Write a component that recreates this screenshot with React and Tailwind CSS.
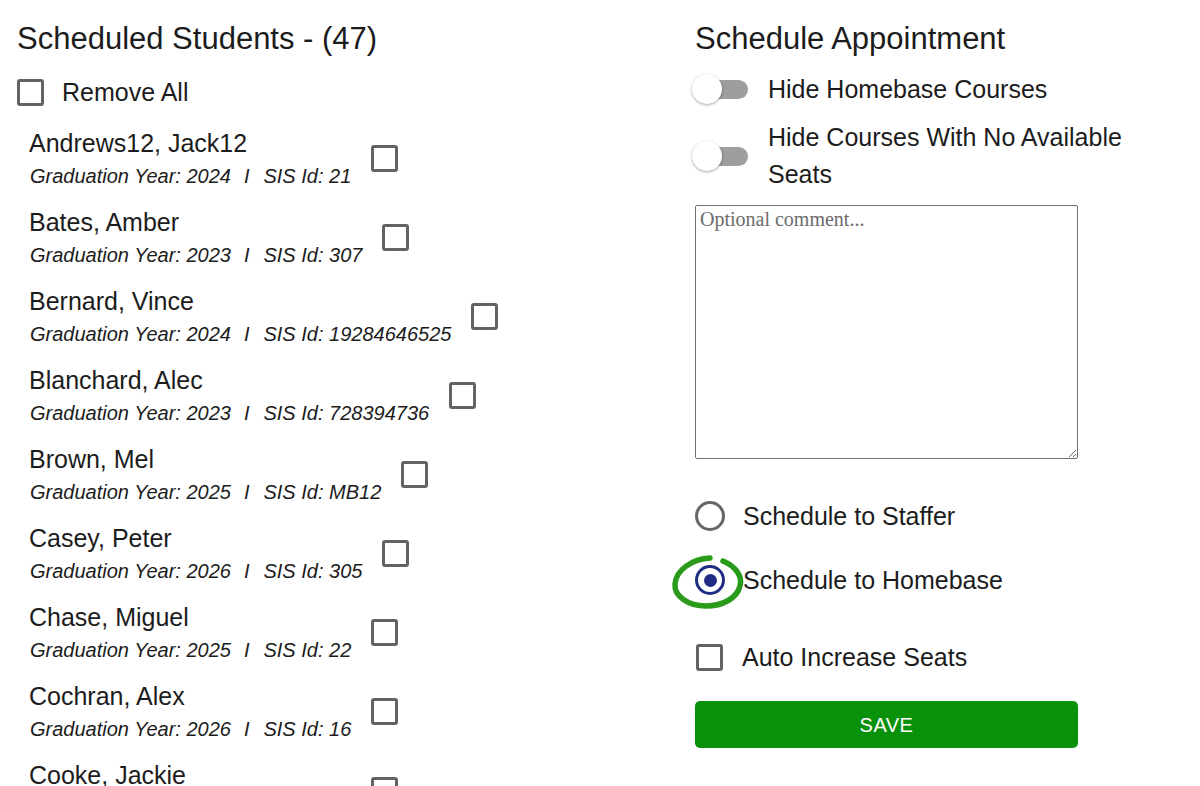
import React from "react";

const students = [
  { name: "Andrews12, Jack12", year: 2024, sis: "21" },
  { name: "Bates, Amber", year: 2023, sis: "307" },
  { name: "Bernard, Vince", year: 2024, sis: "19284646525" },
  { name: "Blanchard, Alec", year: 2023, sis: "728394736" },
  { name: "Brown, Mel", year: 2025, sis: "MB12" },
  { name: "Casey, Peter", year: 2026, sis: "305" },
  { name: "Chase, Miguel", year: 2025, sis: "22" },
  { name: "Cochran, Alex", year: 2026, sis: "16" },
  { name: "Cooke, Jackie", year: 2024, sis: "44" },
];

function Box() {
  return (
    <div className="w-[27px] h-[27px] shrink-0 rounded-[3px] border-[3px] border-[#636363] bg-white" />
  );
}

function Toggle() {
  return (
    <div className="relative w-[56px] h-[30px] shrink-0 -ml-[3px]">
      <div className="absolute left-[5px] top-[6px] w-[51px] h-[19px] rounded-full bg-[#9e9e9e]" />
      <div className="absolute left-0 top-0 w-[30px] h-[30px] rounded-full bg-white shadow-[0_1px_3px_rgba(0,0,0,0.35)]" />
    </div>
  );
}

export default function App() {
  return (
    <div
      className="w-[1200px] h-[786px] overflow-hidden bg-white text-[#1c1c1c] flex"
      style={{ fontFamily: '"Liberation Sans", Arial, Helvetica, sans-serif' }}
    >
      {/* Left column */}
      <div className="w-[695px] shrink-0 pl-[17px] pt-[21px]">
        <h1 className="text-[31px] leading-[36px] font-normal">Scheduled Students - (47)</h1>
        <div className="mt-[17px] h-[36px] flex items-center gap-[18px]">
          <Box />
          <span className="text-[25px] leading-[30px]">Remove All</span>
        </div>
        <div className="mt-[18px] pl-[12px] flex flex-col gap-[18px]">
          {students.map((s) => (
            <div key={s.name} className="flex items-center">
              <div className="flex flex-col">
                <div className="text-[25px] leading-[30px] whitespace-nowrap">{s.name}</div>
                <div className="mt-[5px] text-[20px] leading-[26px] italic whitespace-nowrap pl-[1px] text-[#1c1c1c]">
                  Graduation Year: {s.year}
                  <span className="ml-[13px] mr-[14px]">I</span>
                  SIS Id: {s.sis}
                </div>
              </div>
              <div className="ml-[20px]">
                <Box />
              </div>
            </div>
          ))}
        </div>
      </div>

      {/* Right column */}
      <div className="w-[383px] shrink-0 pt-[21px]">
        <h1 className="text-[31px] leading-[36px] font-normal whitespace-nowrap">Schedule Appointment</h1>

        <div className="mt-[14px] h-[36px] flex items-center">
          <Toggle />
          <span className="ml-[20px] text-[25px] leading-[30px] whitespace-nowrap">Hide Homebase Courses</span>
        </div>

        <div className="mt-[12px] flex items-center">
          <Toggle />
          <span className="ml-[20px] text-[25px] leading-[37px] whitespace-nowrap">
            Hide Courses With No Available
            <br />
            Seats
          </span>
        </div>

        <textarea
          placeholder="Optional comment..."
          className="mt-[12px] block w-[383px] h-[254px] border border-[#6f6f6f] rounded-[2px] px-[4px] py-[1px] text-[20px] leading-[24px] placeholder:text-[#6b6b6b] outline-none"
          style={{ fontFamily: '"Liberation Serif", "Times New Roman", serif' }}
        />

        <div className="mt-[39px] h-[36px] flex items-center">
          <div className="w-[30px] h-[30px] rounded-full border-[3px] border-[#666666] bg-white shrink-0" />
          <span className="ml-[18px] text-[25px] leading-[30px] whitespace-nowrap">Schedule to Staffer</span>
        </div>

        <div className="mt-[28px] h-[36px] flex items-center">
          <div className="relative w-[30px] h-[30px] shrink-0">
            <svg
              className="absolute left-[-27px] top-[-16px] pointer-events-none"
              width="80"
              height="64"
              viewBox="0 0 80 64"
            >
              <path
                d="M55,12 C67,17 75,27 72,37 C69,49 55,57 38,57 C20,57 6,47 7,35 C8,21 24,10 42,9"
                fill="none"
                stroke="#2a9a1a"
                strokeWidth="5.5"
                strokeLinecap="round"
                style={{ filter: "blur(0.4px)" }}
              />
            </svg>
            <div className="absolute inset-0 rounded-full border-[3px] border-[#1f2d84] bg-white flex items-center justify-center">
              <div className="w-[13px] h-[13px] rounded-full bg-[#1f2d84]" />
            </div>
          </div>
          <span className="ml-[18px] text-[25px] leading-[30px] whitespace-nowrap">Schedule to Homebase</span>
        </div>

        <div className="mt-[41px] h-[36px] flex items-center">
          <div className="ml-[1px]">
            <Box />
          </div>
          <span className="ml-[19px] text-[25px] leading-[30px] whitespace-nowrap">Auto Increase Seats</span>
        </div>

        <button className="mt-[26px] w-[383px] h-[47px] rounded-[5px] bg-[#0a910a] text-white text-[20px] leading-[24px] tracking-[0.5px]">
          SAVE
        </button>
      </div>
    </div>
  );
}
